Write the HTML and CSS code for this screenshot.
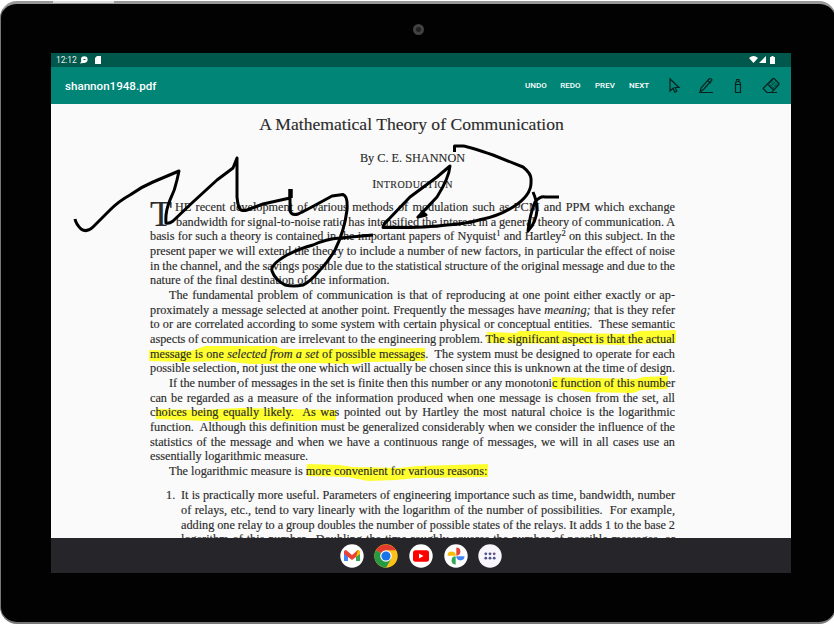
FILE: index.html
```
<!DOCTYPE html>
<html lang="en">
<head>
<meta charset="utf-8">
<title>shannon1948.pdf</title>
<link rel="stylesheet" href="styles.css">
</head>
<body>
<div class="tablet">
  <div class="camera"></div>
  <div class="power-key"></div>
  <main class="screen">
    <div class="status">
      <span class="clock">12:12</span>
      <svg class="st-app" viewBox="0 0 8 8"><circle cx="4.3" cy="3.6" r="3.3" fill="#fff"/><path d="M0 7.5 2 4l2.500 2.700z" fill="#fff"/><path d="M3.500 3.500h2" stroke="#00574b"/></svg>
      <svg class="st-card" viewBox="0 0 6 8"><path d="M2 0h4v8H0V2z" fill="#fff"/></svg>
      <svg class="st-right" viewBox="0 0 28 10"><path d="M0 3Q4.500-1 9 3L4.500 8zM17 1v7H10zM21 2h1.500V1h2v1H26v7h-5z" fill="#fff"/></svg>
    </div>
    <header class="appbar">
      <h1 class="file">shannon1948.pdf</h1>
      <nav class="actions">
        <span class="action undo">UNDO</span><span class="action redo">REDO</span><span class="action prev">PREV</span><span class="action next">NEXT</span>
      </nav>
      <div class="tools">
        <svg viewBox="0 0 18 18"><path d="M5 2v12l3-2.800 1.800 4 2-.9L10 10.500h4z"/></svg>
        <svg viewBox="0 0 18 18"><path d="M3 15l1-4 8-9q2-1 3 1l-8 9zM11 4l3 2M3 15.500h13"/></svg>
        <svg viewBox="0 0 18 18"><path d="M6.500 6.500q0-2 2.500-2t2.500 2v9h-5zM7.500 4V2.500H10V4M6.500 7.500h5"/></svg>
        <svg viewBox="0 0 18 18"><path d="M1.500 11 10.500 2q1-1 2 0l4 4q1 1 0 2l-7 7.500H5l-3.500-3.500q-.5-.5 0-1zM5.500 7l6 6M4.500 15.500H15"/><path class="hatch" d="M7 6.500l5.500 5.500M8.500 5l5.500 5.500M10 3.500l5.500 5.500M9 9l5-5M11 11l5-5M7 7l4-4"/></svg>
      </div>
    </header>
    <section class="page">
      <svg class="layer marks" viewBox="0 0 740 434">
        <path d="M436 228l29 1 3-2h47l6 2 57 1 10-3 37-1v13l-45 1-4 1-48-1-92-1zM98 246l42 1 14-5h70l8 3h52l90-1v13l-60 1-9 2-46-1-60 1-26-3-38 1-37-1zM501 273l84 2 7-2 25-1v3l-1 10-26 1-8 3-46-1-8-2-27-1zM105 305l43 1 42-2 95 2v10l-36 1-45-1-50 1-49-2-1-6zM256 360l33 1 12 2 46 1 20-2 70-2v13l-72 1-20 2-28 1-20-4-41-1z"/>
      </svg>
      <h2 class="title">A Mathematical Theory of Communication</h2>
      <p class="author">By C. E. SHANNON</p>
      <h3 class="intro">I<span class="caps">NTRODUCTION</span></h3>
      <div class="body">
        <div class="opening">
          <span class="dropcap">T</span>
          <div class="lead">
            <p class="ln lead-a">HE recent development of various methods of modulation such as PCM and PPM which exchange</p>
            <p class="ln lead-b">bandwidth for signal-to-noise ratio has intensified the interest in a general theory of communication. A</p>
          </div>
        </div>
        <p class="ln">basis for such a theory is contained in the important papers of Nyquist<sup>1</sup> and Hartley<sup>2</sup> on this subject. In the</p>
        <p class="ln">present paper we will extend the theory to include a number of new factors, in particular the effect of noise</p>
        <p class="ln">in the channel, and the savings possible due to the statistical structure of the original message and due to the</p>
        <p class="ln end">nature of the final destination of the information.</p>
        <p class="ln first">The fundamental problem of communication is that of reproducing at one point either exactly or ap-</p>
        <p class="ln">proximately a message selected at another point. Frequently the messages have <i>meaning;</i> that is they refer</p>
        <p class="ln">to or are correlated according to some system with certain physical or conceptual entities.&nbsp; These semantic</p>
        <p class="ln">aspects of communication are irrelevant to the engineering problem. The significant aspect is that the actual</p>
        <p class="ln">message is one <i>selected from a set</i> of possible messages.&nbsp; The system must be designed to operate for each</p>
        <p class="ln">possible selection, not just the one which will actually be chosen since this is unknown at the time of design.</p>
        <p class="ln first">If the number of messages in the set is finite then this number or any monotonic function of this number</p>
        <p class="ln">can be regarded as a measure of the information produced when one message is chosen from the set, all</p>
        <p class="ln">choices being equally likely.&nbsp; As was pointed out by Hartley the most natural choice is the logarithmic</p>
        <p class="ln">function.&nbsp; Although this definition must be generalized considerably when we consider the influence of the</p>
        <p class="ln">statistics of the message and when we have a continuous range of messages, we will in all cases use an</p>
        <p class="ln end">essentially logarithmic measure.</p>
        <p class="ln first end">The logarithmic measure is more convenient for various reasons:</p>
        <div class="item">
          <span class="num">1.</span>
          <div class="item-text">
            <p class="ln">It is practically more useful. Parameters of engineering importance such as time, bandwidth, number</p>
            <p class="ln">of relays, etc., tend to vary linearly with the logarithm of the number of possibilities.&nbsp; For example,</p>
            <p class="ln">adding one relay to a group doubles the number of possible states of the relays. It adds 1 to the base 2</p>
            <p class="ln">logarithm of this number.&nbsp; Doubling the time roughly squares the number of possible messages, or</p>
          </div>
        </div>
      </div>
      <svg class="layer ink" viewBox="0 0 740 434">
        <path d="M24 115Q25 120 30 125Q36 129 42 123L59 106Q68 97 79 91Q90 83 102 78L128 67L126 76Q124 86 119 96Q114 108 115 119Q118 120 122 117L142 98L166 76L182 64L186 54V93Q187 104 190 106Q193 107 196 106L212 100L239 94"/>
        <path d="M239.500 85V94" class="blot"/>
        <path d="M239 94V107Q241 112 247 110Q252 108 281 92L292 90.500Q297 92 296 106C294 122 290 134 284 146Q277 158 269 166Q259 178 252 181Q243 183 234 181Q224 176 221 167Q219 161 236 151Q250 144 262 141Q275 135 289 134L322 131"/>
        <path d="M403.500 48V42H412Q419 43 442 51L472 63Q481 70 480 77Q481 91 462 103Q448 112 432 115Q415 120 396 121Q374 124 332 123.500Q333 119 337 116L359 93L386 73L399 62Q398 74 386 93L367 113L375 111L370 107"/>
        <path d="M482 88Q486 97 486 106Q485 119 477 127Q479 110 484 98Q489 92 494 93H508"/>
      </svg>
    </section>
    <footer class="dock">
      <svg viewBox="0 0 24 24"><circle cx="12" cy="12" r="11.700" fill="#fff"/><path d="M4 7v10h4V9z" fill="#4285f4"/><path d="M16 9v8h4V7z" fill="#34a853"/><path d="M16 7l2-1q2 0 2 2v2l-4 3z" fill="#fbbc04"/><path d="M4 8q0-2 2-2l6 5 6-5-2 7-4 3-8-6z" fill="#ea4335"/></svg>
      <svg viewBox="0 0 24 24"><circle cx="12" cy="12" r="11.700" fill="#fbc116"/><path d="M12 12 1.900 6.200A11.700 11.700 0 0 1 22.100 6.200H12z" fill="#e33b2e"/><path d="M1.900 6.200A11.700 11.700 0 0 0 12 23.700L17 15l-5-3z" fill="#269a43"/><circle cx="12" cy="12" r="5.800" fill="#fff"/><circle cx="12" cy="12" r="4.600" fill="#1a73e8"/></svg>
      <svg viewBox="0 0 24 24"><circle cx="12" cy="12" r="11.700" fill="#fff"/><rect x="4" y="6.300" width="16" height="11.400" rx="2.500" fill="red"/><path d="M10 9.500v5l4.500-2.500z" fill="#fff"/></svg>
      <svg viewBox="0 0 24 24"><circle cx="12" cy="12" r="11.700" fill="#fff"/><path d="M12.300 3.500a4 4 0 0 1 0 8.200z" fill="#ea4335"/><path d="M20.500 12.300a4 4 0 0 1-8.200 0z" fill="#4285f4"/><path d="M11.700 20.500a4 4 0 0 1 0-8.200z" fill="#34a853"/><path d="M3.500 11.700a4 4 0 0 1 8.200 0z" fill="#fbbc04"/></svg>
      <svg viewBox="0 0 24 24"><circle cx="12" cy="12" r="11.700" fill="#f8f5fd"/><g fill="#4b5288"><circle cx="7.800" cy="9.800" r="1.400"/><circle cx="12" cy="9.800" r="1.400"/><circle cx="16.200" cy="9.800" r="1.400" fill="#755478"/><circle cx="7.800" cy="14.200" r="1.400"/><circle cx="12" cy="14.200" r="1.400"/><circle cx="16.200" cy="14.200" r="1.400"/></g></svg>
    </footer>
  </main>
</div>
</body>
</html>
```
FILE: styles.css
```
* { box-sizing: border-box; }
body { margin: 0; background: #fff; overflow: hidden; }
h1, h2, h3, p { margin: 0; font-weight: 400; }
.tablet { position: relative; width: 836px; height: 623px; margin-top: 1px; padding: 49px 42px 48px 50px; border: 1px solid #777; border-top: 3px solid #999; border-bottom-width: 2px; border-radius: 17px; background: #020202; }
.camera { position: absolute; left: 412px; top: 20px; width: 11px; height: 11px; border: 3px solid #424242; border-radius: 50%; background: #222; }
.power-key { position: absolute; left: 52px; top: -3px; width: 61px; height: 2px; background: #ddd; }
.screen { width: 740px; height: 520px; display: flex; flex-direction: column; background: #fafafa; overflow: hidden; }
.status { height: 14px; flex: none; display: flex; align-items: center; padding: 0 14px 0 5px; background: #00574b; font: 8.500px Roboto, sans-serif; color: #e8f0ee; }
.clock { width: 24px; letter-spacing: -.1px; }
.st-app { width: 8px; height: 8px; }
.st-card { width: 6px; height: 8px; margin-left: 7px; }
.st-right { width: 28px; height: 10px; margin-left: auto; }
.appbar { height: 37px; flex: none; display: flex; align-items: center; padding-left: 14px; background: #008577; color: #fff; font-family: Roboto, sans-serif; }
.file { font-size: 11.600px; font-weight: 500; width: 460px; }
.actions { display: flex; font-size: 8px; font-weight: 500; }
.action { width: 35.300px; }
.redo { width: 34.700px; }
.prev { width: 34px; }
.next { width: 36px; }
.tools { display: flex; gap: 14.200px; }
.tools svg { width: 18px; height: 18px; fill: none; stroke: #07231f; stroke-width: 1.200; }
.tools .hatch { stroke-width: .5; }
.page { position: relative; height: 434px; flex: none; padding: 0 116px 0 99px; overflow: hidden; font-family: "Liberation Serif", serif; color: #2b2b2b; -webkit-text-stroke: .15px #2b2b2b; }
.layer { position: absolute; left: 0; top: 0; width: 740px; height: 434px; }
.marks { fill: #ffff2e; }
.ink { fill: none; stroke: #000; stroke-width: 3; stroke-linejoin: round; }
.ink .blot { stroke-width: 4.500; }
.title, .author, .intro, .body { position: relative; }
.title { height: 38px; padding-top: 10px; margin-left: -2px; font-size: 17.600px; line-height: 20px; text-align: center; white-space: nowrap; }
.author { height: 29px; padding-top: 8px; font-size: 12.250px; line-height: 16px; text-align: center; }
.intro { height: 29px; padding-top: 5px; font-size: 12.250px; line-height: 16px; text-align: center; }
.caps { font-size: 10px; letter-spacing: .4px; }
.ln { height: 14.670px; line-height: 14.670px; font-size: 12.250px; word-spacing: -.4px; white-space: nowrap; text-align: justify; text-align-last: justify; }
.ln.end { text-align-last: left; word-spacing: 0; }
.ln.first { padding-left: 19px; }
.ln sup { font-size: 8.500px; line-height: 0; vertical-align: 4px; }
.opening { display: flex; }
.dropcap { width: 25px; font-size: 36px; line-height: 29px; height: 29.340px; }
.lead { flex: 1; }
.lead-b { padding-left: 1px; }
.item { display: flex; padding: 10px 0 0 16px; }
.num { width: 15px; font-size: 12.250px; line-height: 14.670px; }
.item-text { flex: 1; }
.dock { height: 35px; flex: none; display: flex; justify-content: center; align-items: center; gap: 10.700px; background: #26252a; }
.dock svg { width: 24px; height: 24px; }
```
